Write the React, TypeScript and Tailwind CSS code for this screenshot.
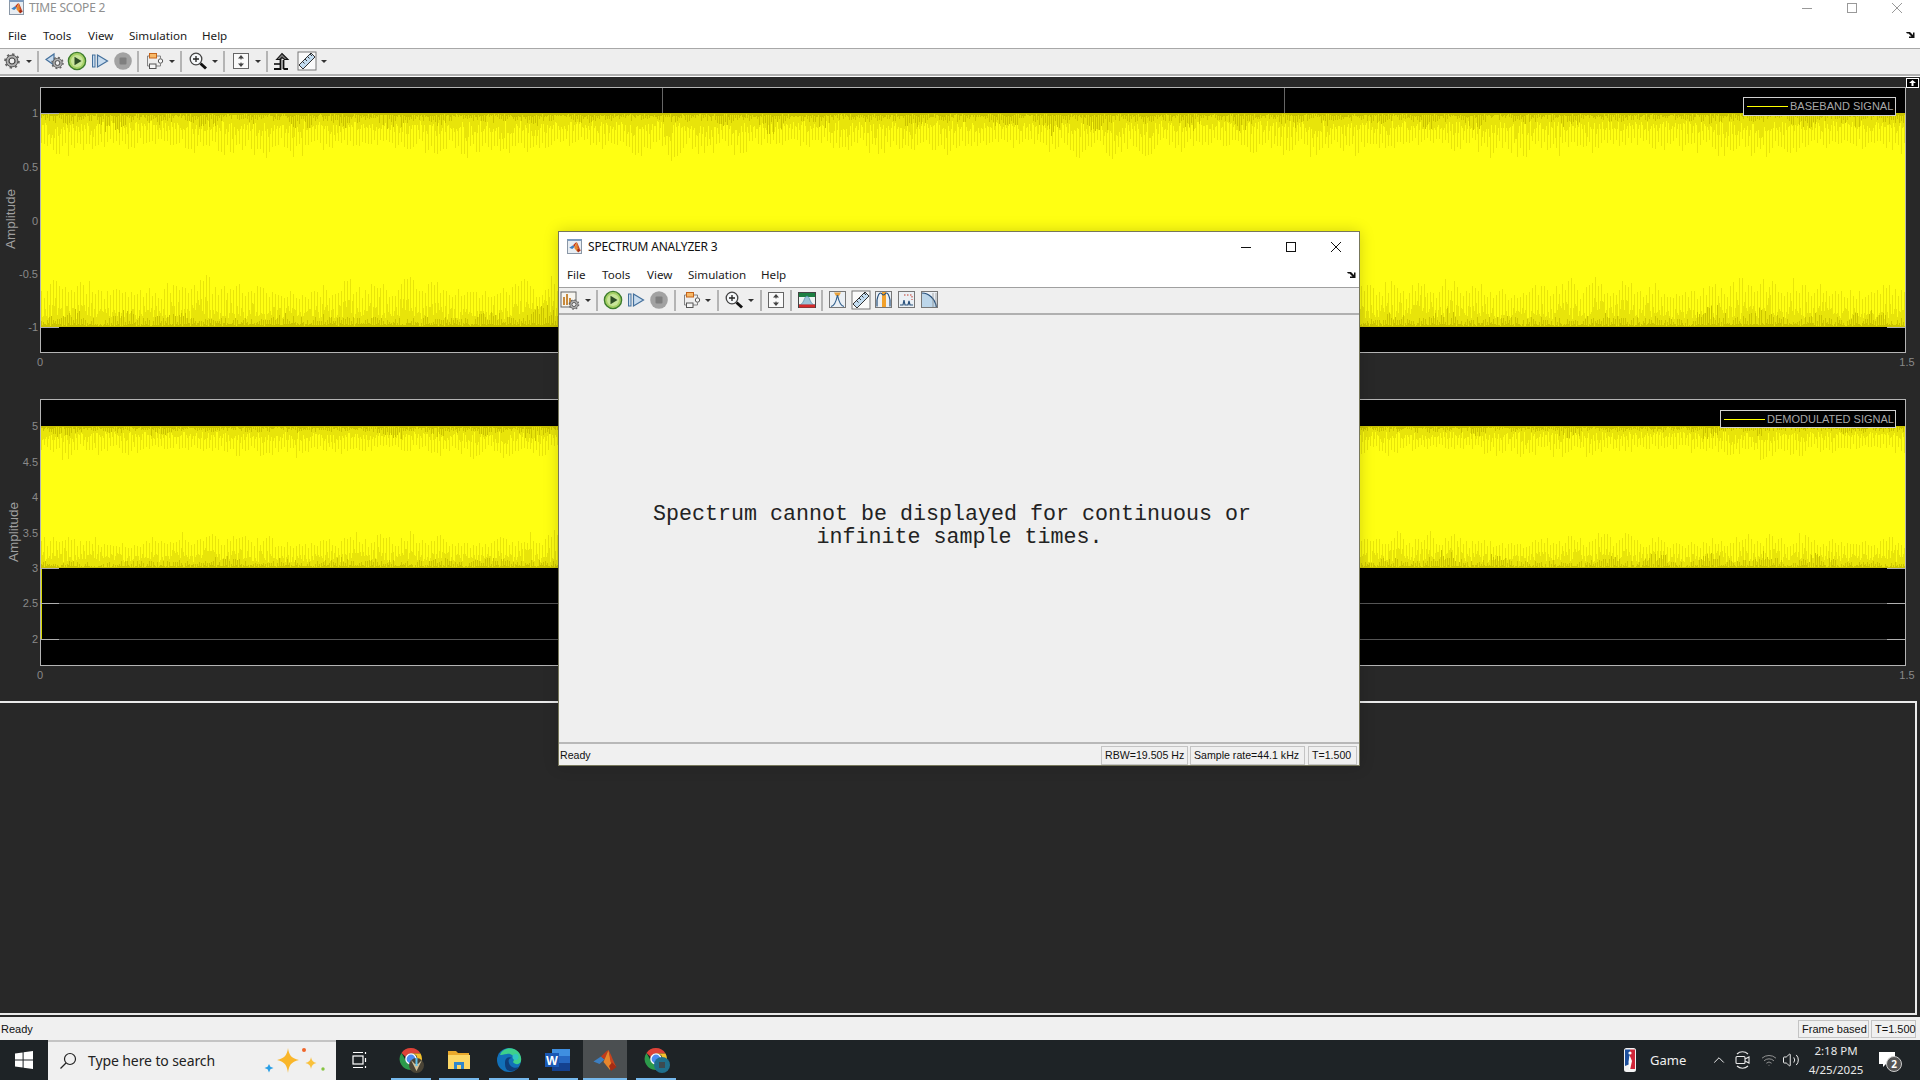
import React from "react";
import { ChevronUp, Volume2, Wifi } from "lucide-react";

type IP = { className?: string };

function rnd(i: number) {
  const s = Math.sin(i * 12.9898) * 43758.5453;
  return s - Math.floor(s);
}

function buildWave(W: number, H: number, scale: number, seed: number) {
  let mid = "";
  let dark = "";
  for (let x = 0; x < W; x++) {
    const p = x + 0.5;
    const envT = 0.45 + 0.55 * Math.abs(Math.sin((x * Math.PI) / 34 + seed) * Math.cos((x * Math.PI) / 211 + seed));
    const envB = 0.45 + 0.55 * Math.abs(Math.sin((x * Math.PI) / 29 + seed * 2) * Math.cos((x * Math.PI) / 173));
    const r1 = rnd(x + seed);
    const r2 = rnd(x * 1.7 + seed + 11);
    const r3 = rnd(x * 2.3 + seed + 37);
    const r4 = rnd(x * 3.1 + seed + 53);
    const tall = x % 3 === 0;
    const dTop = scale * (tall ? 18 + 30 * envT * (0.45 + 0.55 * r1) : 8 + 20 * envT * r1);
    const dBot = scale * (tall ? 20 + 34 * envB * (0.45 + 0.55 * r3) : 8 + 24 * envB * r3);
    mid += `M${p} 0V${dTop.toFixed(1)}`;
    mid += `M${p} ${H}V${(H - dBot).toFixed(1)}`;
    const lobeT = rnd(Math.floor(x / 47) + seed * 5);
    const lobeB = rnd(Math.floor(x / 53) + seed * 7);
    const kT = Math.pow(Math.abs(Math.sin((x * Math.PI) / 47)), 2) * lobeT;
    const kB = Math.pow(Math.abs(Math.sin((x * Math.PI) / 53)), 2) * lobeB;
    const dkT = scale * (1 + (x % 2 === 0 ? 18 * kT * r2 + 7 * r3 : 3 * r3));
    const dkB = scale * (1 + (x % 2 === 0 ? 20 * kB * r4 + 9 * r1 : 3 * r1));
    dark += `M${p} 0V${dkT.toFixed(1)}`;
    dark += `M${p} ${H}V${(H - dkB).toFixed(1)}`;
  }
  return { mid, dark };
}

const wave1 = buildWave(1864, 214, 1, 3);
const wave2 = buildWave(1864, 142, 0.72, 9);

function Wave({ data, h, className }: { data: { mid: string; dark: string }; h: number; className: string }) {
  return (
    <svg className={className} width={1864} height={h} viewBox={`0 0 1864 ${h}`} shapeRendering="crispEdges">
      <rect width={1864} height={h} fill="#ffff12" />
      <path d={data.mid} stroke="#e8e40a" strokeWidth={1} fill="none" />
      <path d={data.dark} stroke="#cbc400" strokeWidth={1} fill="none" />
    </svg>
  );
}

const Svg = ({ className, children }: IP & { children: React.ReactNode }) => (
  <svg className={"shrink-0 " + (className ?? "")} width={20} height={20} viewBox="0 0 20 20">
    {children}
  </svg>
);

const GearShape = ({ cx = 10, cy = 10, s = 1 }: { cx?: number; cy?: number; s?: number }) => (
  <g transform={`translate(${cx} ${cy}) scale(${s})`}>
    <circle r={6.9} fill="none" stroke="#666" strokeWidth={1.8} strokeDasharray="2.4 3" />
    <circle r={5.9} fill="#b0b0b0" stroke="#555" strokeWidth={1} />
    <circle r={3} fill="#f0f0f0" stroke="#444" strokeWidth={1.2} />
  </g>
);

const Gear = (p: IP) => <Svg {...p}><GearShape /></Svg>;
const BackGear = (p: IP) => (
  <Svg {...p}>
    <path d="M1 8.5 L9 3 V14 Z" fill="#c5d9ec" stroke="#44709c" strokeWidth={1.2} />
    <GearShape cx={12.5} cy={12} s={0.8} />
  </Svg>
);
const Play = (p: IP) => (
  <Svg {...p}>
    <circle cx={10} cy={10} r={8.6} fill="#a6d066" stroke="#3d7d2c" strokeWidth={1.4} />
    <circle cx={10} cy={10} r={6} fill="#c8e59a" />
    <path d="M7.5 5.8 L14.5 10 L7.5 14.2 Z" fill="#2e4d26" />
  </Svg>
);
const Step = (p: IP) => (
  <Svg {...p}>
    <rect x={2.5} y={4} width={2.5} height={12} fill="#c8dcef" stroke="#44709c" />
    <path d="M7.5 4 L17.5 10 L7.5 16 Z" fill="#c8dcef" stroke="#44709c" strokeWidth={1.2} />
  </Svg>
);
const Stop = (p: IP) => (
  <Svg {...p}>
    <circle cx={10} cy={10} r={8.8} fill="#a2a2a2" />
    <rect x={6.5} y={6.5} width={7} height={7} rx={1} fill="#7f7f7f" />
  </Svg>
);
const Block = (p: IP) => (
  <Svg {...p}>
    <path d="M5 5 H2.5 V15 H5.5 M11 5 H15.5 V7.5 M10 15 H15.5 V12.5" fill="none" stroke="#777" strokeWidth={0.9} />
    <rect x={4.5} y={2.5} width={7} height={4.5} fill="#f7b867" stroke="#c5641a" />
    <rect x={4.5} y={13} width={6.5} height={4.5} fill="#f6f6f6" stroke="#555" />
    <circle cx={15.5} cy={10} r={2.2} fill="#f6f6f6" stroke="#555" />
  </Svg>
);
const Zoom = (p: IP) => (
  <Svg {...p}>
    <circle cx={8} cy={8} r={5.8} fill="#f6f8fa" stroke="#444" strokeWidth={1.3} />
    <path d="M5 8 H11 M8 5 V11" stroke="#222" strokeWidth={1.3} />
    <path d="M12.5 12.5 L18 17.5" stroke="#111" strokeWidth={3} />
  </Svg>
);
const Fit = (p: IP) => (
  <Svg {...p}>
    <rect x={2.5} y={2.5} width={15} height={15} fill="#fafafa" stroke="#666" />
    <path d="M10 4 L13 7.5 H7 Z M10 16 L13 12.5 H7 Z" fill="#444" />
    <path d="M10 7 V8.5 M10 13 V11.5" stroke="#444" />
  </Svg>
);
const Trigger = (p: IP) => (
  <Svg {...p}>
    <path d="M2 18 H8.5 V7.5" fill="none" stroke="#111" strokeWidth={1.8} />
    <path d="M11.5 18 H16 M11.5 18 V9" fill="none" stroke="#111" strokeWidth={1.8} />
    <path d="M4.5 8.5 L10 2.5 L16 8.5 L12.5 8.5 L10 6.5 L8 8.5 Z" fill="#777" stroke="#111" strokeWidth={1.1} />
    <path d="M2 13 L8 13" stroke="#111" strokeWidth={1.6} />
  </Svg>
);
const Ruler = (p: IP) => (
  <Svg {...p}>
    <rect x={1} y={1} width={18} height={18} fill="#fafafa" stroke="#777" />
    <path d="M2 14 L14 2 L18 6 L6 18 Z" fill="#c3dcf0" stroke="#333" />
    <path d="M5.5 10.5 L7.5 12.5 M8 8 L10 10 M10.5 5.5 L12.5 7.5 M13 3 L15 5" stroke="#333" />
  </Svg>
);
const Caret = ({ className }: IP) => (
  <svg className={"shrink-0 " + (className ?? "")} width={8} height={5} viewBox="0 0 8 5">
    <path d="M1 1 H7 L4 4 Z" fill="#333" />
  </svg>
);
const Sep = ({ className }: IP) => <div className={"w-[2px] h-[21px] shrink-0 bg-[#b4b4b4] " + (className ?? "")} />;
const ChartGear = (p: IP) => (
  <Svg {...p}>
    <rect x={1} y={2} width={15} height={15} fill="#f6f4ee" stroke="#666" />
    <path d="M4 15 V7 M7 15 V4 M10 15 V8" stroke="#c98a3c" strokeWidth={2} />
    <GearShape cx={14} cy={14.5} s={0.68} />
  </Svg>
);
const SpectrumIcon = (p: IP) => (
  <Svg {...p}>
    <rect x={1.5} y={2.5} width={17} height={15} fill="#eef4f2" stroke="#444" />
    <rect x={2} y={3} width={16} height={4} fill="#1c7f42" />
    <path d="M2 15 C7 15 7 6 10 6 C13 6 13 15 18 15 Z" fill="#9cc4d8" stroke="#3a7a9a" strokeWidth={0.6} />
    <rect x={2} y={14.5} width={16} height={3} fill="#d62a2a" />
  </Svg>
);
const Frame = ({ children, ...p }: IP & { children: React.ReactNode }) => (
  <Svg {...p}>
    <rect x={1.5} y={1.5} width={16} height={16} fill="#ebf0f5" stroke="#777" />
    {children}
  </Svg>
);
const PeakA = (p: IP) => (
  <Frame {...p}>
    <path d="M6 2.5 H13 L11 6 H8 Z" fill="#eaa23c" />
    <path d="M3 16.5 C7 16 8.5 10 9.5 5 C10.5 10 12 16 16 16.5" fill="none" stroke="#33618f" strokeWidth={1.2} />
  </Frame>
);
const PeakB = (p: IP) => (
  <Frame {...p}>
    <rect x={8} y={2} width={4} height={15} fill="#f2a12b" />
    <path d="M3 16.5 V10 C4 5 5 3 6.5 3 C8 3 8 5 9.5 5 C11 5 11 3 12.5 3 C14 3 15 5 16 10 V16.5" fill="none" stroke="#27507c" strokeWidth={1.2} />
  </Frame>
);
const PeakC = (p: IP) => (
  <Frame {...p}>
    <path d="M3 15 H6 L7 10 L8 15 H11 L12 11 L13 15 H16" fill="none" stroke="#27507c" strokeWidth={1.2} />
    <path d="M7 5 H15 V10" fill="none" stroke="#c0392b" strokeDasharray="1.5 1.5" />
  </Frame>
);
const PeakD = (p: IP) => (
  <Frame {...p}>
    <path d="M2 3 C9 3 15 9 16.5 17 H2 Z" fill="#bcd6ea" />
    <path d="M2 3 C9 3 15 9 16.5 17" fill="none" stroke="#27507c" strokeWidth={1.2} />
    <path d="M13 3 V17 M16 3 V17" stroke="#888" strokeWidth={0.7} />
  </Frame>
);

const MatlabMark = ({ size = 14 }: { size?: number }) => (
  <svg className="shrink-0" width={size} height={size} viewBox="0 0 24 24">
    <path d="M0.5 13.5 L8 8.5 L11.5 11.5 L6.5 16 Z" fill="#3d7fc1" />
    <path d="M8 8.5 L11.5 11.5 L15.5 2 C13 3 11 6 8 8.5 Z" fill="#c23a1b" />
    <path d="M15.5 2 L11.5 11.5 L10.5 14 L17 22 L19 17 Z" fill="#e8862c" />
    <path d="M15.5 2 C18 6 20.5 14 23.5 19 L17.5 14 Z" fill="#c8431d" />
    <path d="M19 14.5 L23.5 19 L18 23 L16 18 Z" fill="#a52c14" />
  </svg>
);
const WindowIcon = () => (
  <div className="w-[15px] h-[15px] shrink-0 flex items-center justify-center bg-[#e8edf2] border border-[#8a97a6] border-t-[2px] border-t-[#7d9cc0]">
    <MatlabMark size={12} />
  </div>
);

const OverflowArrow = ({ className }: IP) => (
  <svg className={className} width={9} height={8} viewBox="0 0 9 8">
    <path d="M0 1 H4 L7 4 V1.5 H8.5 V7 H3 V5.5 H5.5 L2.5 2.5 H1 Z" fill="#111" />
  </svg>
);

const WinControls = ({ color, gapClass }: { color: string; gapClass: string }) => (
  <div className={"flex items-center " + gapClass}>
    <svg width={10} height={10} viewBox="0 0 10 10"><path d="M0 5.5 H10" stroke={color} /></svg>
    <svg width={10} height={10} viewBox="0 0 10 10"><rect x={0.5} y={0.5} width={9} height={9} fill="none" stroke={color} /></svg>
    <svg width={10} height={10} viewBox="0 0 10 10"><path d="M0 0 L10 10 M10 0 L0 10" stroke={color} /></svg>
  </div>
);

const MENU = "font-['Noto_Sans',sans-serif] text-[11.6px] leading-none text-[#1a1a1a]";

function Menu({ className }: IP) {
  return (
    <div className={"flex items-center " + MENU + " " + (className ?? "")}>
      <span className="w-[35px]">File</span>
      <span className="w-[45px]">Tools</span>
      <span className="w-[41px]">View</span>
      <span className="w-[73px]">Simulation</span>
      <span>Help</span>
    </div>
  );
}

const yTicks1 = [
  { c: "top-[25px]", t: "1" },
  { c: "top-[79px]", t: "0.5" },
  { c: "top-[133px]", t: "0" },
  { c: "top-[186px]", t: "-0.5" },
  { c: "top-[239px]", t: "-1" },
];
const yTicks2 = [
  { c: "top-[26px]", t: "5" },
  { c: "top-[62px]", t: "4.5" },
  { c: "top-[97px]", t: "4" },
  { c: "top-[133px]", t: "3.5" },
  { c: "top-[168px]", t: "3" },
  { c: "top-[203px]", t: "2.5" },
  { c: "top-[239px]", t: "2" },
];
const AX = "font-['Liberation_Sans',sans-serif] text-[11px] leading-none text-[#8a8a8a]";

function Ticks({ ticks }: { ticks: { c: string; t: string }[] }) {
  return (
    <>
      {ticks.map((k) => (
        <span key={k.t} className={"absolute right-full mr-[3px] -translate-y-1/2 " + AX + " " + k.c}>{k.t}</span>
      ))}
    </>
  );
}

const XLabels = () => (
  <>
    <span className={"absolute top-full mt-[5px] -left-[1px] -translate-x-1/2 " + AX}>0</span>
    <span className={"absolute top-full mt-[5px] -right-[2px] translate-x-1/2 " + AX}>1.5</span>
  </>
);

function Legend({ label, className }: { label: string; className: string }) {
  return (
    <div className={"absolute flex items-center bg-black border border-[#d0d0d0] pl-[3px] " + className}>
      <div className="w-[41px] h-[1px] bg-[#ffff00] mr-[2px] shrink-0" />
      <span className="font-['Liberation_Sans',sans-serif] text-[11px] leading-none text-[#a8a8a8] whitespace-nowrap">{label}</span>
    </div>
  );
}

const TL = "absolute left-0 w-[18px] h-px bg-[#b0b0b0]";
const TR = "absolute right-0 w-[18px] h-px bg-[#b0b0b0]";

function Plot1() {
  return (
    <div className="relative ml-[40px] w-[1866px] h-[266px] bg-black border border-[#b4b4b4] mt-[10px]">
      <div className="absolute left-[621px] top-0 w-px h-[25px] bg-[#666]" />
      <div className="absolute left-[1243px] top-0 w-px h-[25px] bg-[#666]" />
      <Wave data={wave1} h={214} className="absolute left-0 top-[25px]" />
      <div className={TL + " top-[25px]"} />
      <div className={TL + " top-[239px]"} />
      <div className={TR + " top-[239px]"} />
      <Ticks ticks={yTicks1} />
      <XLabels />
      <span className="absolute -left-[60px] top-[131px] w-[60px] text-center -translate-y-1/2 -rotate-90 font-['Liberation_Sans',sans-serif] text-[13.5px] leading-none text-[#a0a0a0]">Amplitude</span>
      <Legend label="BASEBAND SIGNAL" className="left-[1702px] top-[9px] w-[153px] h-[19px]" />
    </div>
  );
}

function Plot2() {
  return (
    <div className="relative ml-[40px] w-[1866px] h-[267px] bg-black border border-[#b4b4b4] mt-[46px]">
      <div className="absolute left-0 right-0 top-[203px] h-px bg-[#555]" />
      <div className="absolute left-0 right-0 top-[239px] h-px bg-[#555]" />
      <div className="absolute left-0 top-[168px] w-px h-[71px] bg-[#d8d800]" />
      <Wave data={wave2} h={142} className="absolute left-0 top-[26px]" />
      <div className={TL + " top-[168px]"} />
      <div className={TL + " top-[203px]"} />
      <div className={TL + " top-[239px]"} />
      <div className={TR + " top-[168px]"} />
      <div className={TR + " top-[203px]"} />
      <div className={TR + " top-[239px]"} />
      <Ticks ticks={yTicks2} />
      <XLabels />
      <span className="absolute -left-[57px] top-[132px] w-[60px] text-center -translate-y-1/2 -rotate-90 font-['Liberation_Sans',sans-serif] text-[13.5px] leading-none text-[#a0a0a0]">Amplitude</span>
      <Legend label="DEMODULATED SIGNAL" className="left-[1679px] top-[10px] w-[176px] h-[18px]" />
    </div>
  );
}

const CELL = "flex items-center px-[3px] border border-[#c4c4c4] font-['Liberation_Sans',sans-serif] leading-none text-[#111] whitespace-nowrap";

function SpectrumWindow() {
  return (
    <div className="absolute left-[558px] top-[231px] w-[802px] h-[535px] flex flex-col bg-[#efefef] border border-[#77775a] shadow-[0_0_14px_rgba(0,0,0,0.18)]">
      <div className="bg-white h-[56px] shrink-0 flex flex-col border-b border-[#a0a0a0] relative">
        <div className="h-[29px] flex items-center pl-[8px] pr-[18px]">
          <WindowIcon />
          <span className="ml-[6px] font-['Noto_Sans',sans-serif] text-[12px] leading-none text-[#111] tracking-[-0.2px]">SPECTRUM ANALYZER 3</span>
          <div className="ml-auto"><WinControls color="#111" gapClass="gap-[35px]" /></div>
        </div>
        <Menu className="ml-[8px] mt-[8px]" />
        <OverflowArrow className="absolute right-[3px] top-[39px]" />
      </div>
      <div className="h-[27px] shrink-0 flex items-center border-b-2 border-[#b0b0b0] pb-[1px]">
        <ChartGear className="ml-[1px]" /><Caret className="ml-[4px]" /><Sep className="ml-[4px]" />
        <Play className="ml-[5px]" /><Step className="ml-[3px]" /><Stop className="ml-[3px]" /><Sep className="ml-[5px]" />
        <Block className="ml-[6px]" /><Caret className="ml-[2px]" /><Sep className="ml-[5px]" />
        <Zoom className="ml-[5px]" /><Caret className="ml-[3px]" /><Sep className="ml-[5px]" />
        <Fit className="ml-[4px]" /><Sep className="ml-[4px]" />
        <SpectrumIcon className="ml-[5px]" /><Sep className="ml-[4px]" />
        <PeakA className="ml-[5px]" /><Ruler className="ml-[3px]" /><PeakB className="ml-[3px]" /><PeakC className="ml-[3px]" /><PeakD className="ml-[3px]" />
      </div>
      <div className="flex-1 flex items-center justify-center pr-[14px] pb-[6px] font-['Liberation_Mono',monospace] text-[21.67px] leading-[23px] text-[#222] text-center">
        <div>Spectrum cannot be displayed for continuous or<br /><span className="pl-[15px]">infinite sample times.</span></div>
      </div>
      <div className="h-[23px] shrink-0 flex items-center border-t-2 border-[#b8b8b8] bg-[#f0f0f0] pr-[2px] pt-[1px]">
        <span className="ml-[1px] font-['Liberation_Sans',sans-serif] text-[10.6px] leading-none text-[#111]">Ready</span>
        <div className={CELL + " text-[10.6px] ml-auto w-[87px] h-[19px]"}>RBW=19.505 Hz</div>
        <div className={CELL + " text-[10.6px] ml-[2px] w-[115px] h-[19px]"}>Sample rate=44.1 kHz</div>
        <div className={CELL + " text-[10.6px] ml-[3px] w-[49px] h-[19px]"}>T=1.500</div>
      </div>
    </div>
  );
}

/* Taskbar glyphs */
const WinLogo = () => (
  <svg width={18} height={18} viewBox="0 0 18 18">
    <path d="M0 2.6 L7.6 1.5 V8.5 H0 Z M8.6 1.3 L18 0 V8.5 H8.6 Z M0 9.5 H7.6 V16.5 L0 15.4 Z M8.6 9.5 H18 V18 L8.6 16.7 Z" fill="#fff" />
  </svg>
);
const Chrome = ({ badge }: { badge: "a" | "b" }) => (
  <svg width={28} height={28} viewBox="0 0 28 28">
    <g transform="translate(2 1)">
      <path d="M12 1 A11 11 0 0 1 21.5 6.5 H12 A5.5 5.5 0 0 0 6.8 10 L2.5 6 A11 11 0 0 1 12 1 Z" fill="#dd4238" />
      <path d="M21.5 6.5 A11 11 0 0 1 12.5 23 L17 14.8 A5.5 5.5 0 0 0 17 8 L12 6.5 Z" fill="#f3c02c" />
      <path d="M2.5 6 L7.5 15 A5.5 5.5 0 0 0 13 17.5 L12.5 23 A11 11 0 0 1 2.5 6 Z" fill="#2c9a4b" />
      <circle cx={12} cy={12} r={5.8} fill="#fff" />
      <circle cx={12} cy={12} r={4.4} fill="#4b8bf0" />
      {badge === "a" ? (
        <g>
          <circle cx={17.5} cy={18.5} r={7.5} fill="#4a4436" />
          <path d="M12 13 L17.5 24 L23 13 L19 17 H16 Z" fill="#d2c29a" />
          <path d="M17.5 11 V19" stroke="#5ec0ea" strokeWidth={2} />
        </g>
      ) : (
        <g>
          <circle cx={18} cy={18} r={8} fill="#1f6f8c" />
          <rect x={15} y={15} width={6} height={6} fill="#3d4a50" />
        </g>
      )}
    </g>
  </svg>
);
const Explorer = () => (
  <svg width={24} height={24} viewBox="0 0 24 24">
    <path d="M1 3 H9 L11 5 H22 V21 H1 Z" fill="#e9a92c" />
    <rect x={1} y={7} width={22} height={14} fill="#fbd766" />
    <path d="M7 21 V14 H17 V21 H14 V17 H10 V21 Z" fill="#2e86cc" />
  </svg>
);
const Edge = () => (
  <svg width={26} height={26} viewBox="0 0 26 26">
    <circle cx={13} cy={13} r={12} fill="#1270b8" />
    <path d="M4 8 C6 2 13 0 18 2 C23 4 26 9 25 14 C24 18 19 18 17 15 C20 11 16 6 11 7 C8 7.5 5 8 4 8 Z" fill="#3dd08c" />
    <path d="M9 15 C9 11 13 9 16 11 C13 11 12 13 13 16 C14 20 19 22 23 20 C20 24 15 25 11 23 C9 21 9 18 9 15 Z" fill="#0f3e7a" />
    <circle cx={19.5} cy={10} r={3} fill="#2fc4c2" />
  </svg>
);
const Word = () => (
  <svg width={26} height={24} viewBox="0 0 26 24">
    <rect x={7} y={1} width={18} height={7} fill="#3f8fe0" />
    <rect x={7} y={8} width={18} height={7} fill="#2668c2" />
    <rect x={7} y={15} width={18} height={8} fill="#14418f" />
    <rect x={0} y={5} width={14} height={14} fill="#1a58b4" />
    <text x={7} y={16.5} textAnchor="middle" fill="#fff" fontSize={12.5} fontWeight={700} fontFamily="'Liberation Sans', sans-serif">W</text>
  </svg>
);
const SearchStars = () => (
  <svg width={66} height={40} viewBox="0 0 66 40">
    <path d="M26 8 C27 15 29 18 37 20 C29 22 27 25 26 33 C25 25 23 22 15 20 C23 18 25 15 26 8 Z" fill="#f9b62a" />
    <path d="M49 17 C49.5 20.5 51 22 54.5 23 C51 24 49.5 25.5 49 29 C48.5 25.5 47 24 43.5 23 C47 22 48.5 20.5 49 17 Z" fill="#f9c13c" />
    <path d="M7 24 L8.4 26.8 L11.5 28 L8.4 29.2 L7 32.5 L5.6 29.2 L2.5 28 L5.6 26.8 Z" fill="#2a9fe6" />
    <circle cx={42} cy={10} r={2} fill="#f0662a" />
    <circle cx={61} cy={29} r={1.7} fill="#86c440" />
  </svg>
);
const NbaLogo = () => (
  <svg width={12} height={24} viewBox="0 0 12 24">
    <rect width={12} height={24} rx={2.5} fill="#f4f4f4" />
    <path d="M1 1.5 H6 V16 L1 18 Z" fill="#1d4f9c" />
    <path d="M6 1.5 H11 V21 H5 L6 16 Z" fill="#cf2638" />
    <circle cx={6} cy={5} r={1.6} fill="#fff" />
    <path d="M5.5 7 L8 13 L6 22 H5 L4.5 14 Z" fill="#fff" />
  </svg>
);
const MeetIcon = () => (
  <svg width={18} height={20} viewBox="0 0 18 20" fill="none" stroke="#e8e8e8" strokeWidth={1.1}>
    <path d="M3 4 A8 8 0 0 1 14 4 M3 16 A8 8 0 0 0 14 16" />
    <rect x={2} y={6.5} width={9} height={7} rx={1} />
    <path d="M11 9 L15 7 V13 L11 11" />
  </svg>
);

const TaskApp = ({ w, ml, active, children }: { w: string; ml: string; active?: boolean; children: React.ReactNode }) => (
  <div className={"relative h-full shrink-0 flex items-center justify-center " + w + " " + ml + (active ? " bg-[#4b4f51]" : "")}>
    {children}
    <div className="absolute left-0 right-0 bottom-0 h-[2px] bg-[#76b9ed]" />
  </div>
);

export default function App() {
  return (
    <div className="relative w-[1920px] h-[1080px] overflow-hidden flex flex-col bg-[#282828]">
      {/* title + menu */}
      <div className="h-[49px] shrink-0 bg-white border-b border-[#a8a8a8] relative">
        <div className="h-[15px] flex items-center pl-[9px] pr-[18px]">
          <WindowIcon />
          <span className="ml-[5px] font-['Noto_Sans',sans-serif] text-[12px] leading-none text-[#8f8f8f] tracking-[-0.2px]">TIME SCOPE 2</span>
          <div className="ml-auto"><WinControls color="#999" gapClass="gap-[35px]" /></div>
        </div>
        <Menu className="ml-[8px] mt-[15px]" />
        <OverflowArrow className="absolute right-[5px] top-[31px]" />
      </div>
      {/* toolbar */}
      <div className="h-[27px] shrink-0 flex items-center bg-[#eeeeee] border-b-2 border-[#b0b0b0] pb-[1px]">
        <Gear className="ml-[2px]" /><Caret className="ml-[3px]" /><Sep className="ml-[4px]" />
        <BackGear className="ml-[6px]" /><Play className="ml-[2px]" /><Step className="ml-[3px]" /><Stop className="ml-[3px]" /><Sep className="ml-[4px]" />
        <Block className="ml-[6px]" /><Caret className="ml-[3px]" /><Sep className="ml-[4px]" />
        <Zoom className="ml-[6px]" /><Caret className="ml-[3px]" /><Sep className="ml-[4px]" />
        <Fit className="ml-[6px]" /><Caret className="ml-[3px]" /><Sep className="ml-[4px]" />
        <Trigger className="ml-[4px]" /><Ruler className="ml-[5px]" /><Caret className="ml-[3px]" />
      </div>
      {/* plots */}
      <div className="relative flex-1 flex flex-col border-t border-white min-h-0">
        <div className="absolute right-[1px] top-[1px] w-[13px] h-[10px] bg-black border border-white flex items-center justify-center">
          <svg width={7} height={6} viewBox="0 0 7 6"><path d="M3.5 0 L7 3 H4.5 V6 H2.5 V3 H0 Z" fill="#fff" /></svg>
        </div>
        <Plot1 />
        <Plot2 />
        <div className="mt-[35px] w-[1918px] h-[314px] -ml-[1px] border-2 border-white/90 border-l-0" />
      </div>
      {/* status */}
      <div className="h-[23px] shrink-0 flex items-center bg-[#f0f0f0] pr-[4px] pt-[1px]">
        <span className="ml-[1px] font-['Liberation_Sans',sans-serif] text-[11px] leading-none text-[#111]">Ready</span>
        <div className={CELL + " text-[11px] ml-auto w-[71px] h-[18px]"}>Frame based</div>
        <div className={CELL + " text-[11px] ml-[2px] w-[45px] h-[18px]"}>T=1.500</div>
      </div>
      {/* taskbar */}
      <div className="h-[40px] shrink-0 flex items-center bg-[#1e2326] text-white">
        <div className="w-[48px] h-full flex items-center justify-center"><WinLogo /></div>
        <div className="w-[288px] h-full flex items-center bg-[#f0f0f0] border-t-2 border-[#c4c4c4] relative">
          <svg className="ml-[11px]" width={18} height={18} viewBox="0 0 18 18" fill="none" stroke="#222" strokeWidth={1.2}>
            <circle cx={11} cy={7} r={5.5} /><path d="M7 11 L1.5 16.5" />
          </svg>
          <span className="ml-[11px] font-['Noto_Sans',sans-serif] text-[14px] leading-none text-[#222] tracking-[-0.1px]">Type here to search</span>
          <div className="absolute right-[8px] -top-[2px]"><SearchStars /></div>
        </div>
        <div className="w-[48px] h-full flex items-center justify-center">
          <svg width={16} height={18} viewBox="0 0 16 18" fill="none" stroke="#fff" strokeWidth={1.2}>
            <path d="M1 1.5 H11 M1 16.5 H11 M13.5 1 V3 M13.5 7 V11 M13.5 15 V17" /><rect x={1} y={5} width={10} height={8} />
          </svg>
        </div>
        <TaskApp w="w-[40px]" ml="ml-[7px]"><Chrome badge="a" /></TaskApp>
        <TaskApp w="w-[40px]" ml="ml-[8px]"><Explorer /></TaskApp>
        <TaskApp w="w-[40px]" ml="ml-[10px]"><Edge /></TaskApp>
        <TaskApp w="w-[40px]" ml="ml-[9px]"><Word /></TaskApp>
        <TaskApp w="w-[44px]" ml="ml-[5px]" active><MatlabMark size={24} /></TaskApp>
        <TaskApp w="w-[40px]" ml="ml-[9px]"><Chrome badge="b" /></TaskApp>
        <div className="ml-auto flex items-center h-full">
          <NbaLogo />
          <span className="ml-[14px] w-[60px] font-['Noto_Sans',sans-serif] text-[13px] leading-none text-[#f0f0f0]">Game</span>
          <ChevronUp size={18} strokeWidth={1.3} color="#f0f0f0" className="shrink-0" />
          <div className="ml-[6px]"><MeetIcon /></div>
          <Wifi size={16} strokeWidth={1.4} color="#9a9a9a" className="ml-[9px] shrink-0" />
          <Volume2 size={18} strokeWidth={1.3} color="#f0f0f0" className="ml-[5px] shrink-0" />
          <div className="ml-[8px] w-[56px] flex flex-col items-center font-['Noto_Sans',sans-serif] text-[11.5px] leading-[19px] text-[#e8e8e8]">
            <span>2:18 PM</span>
            <span>4/25/2025</span>
          </div>
          <div className="relative ml-[14px] mr-[24px] w-[18px] h-[18px]">
            <svg width={18} height={18} viewBox="0 0 18 18"><path d="M1 1 H17 V13 H8 L5 16 V13 H1 Z" fill="#fff" /></svg>
            <div className="absolute left-[8px] top-[5px] w-[16px] h-[16px] rounded-full bg-[#555] border border-[#ccc] flex items-center justify-center font-['Noto_Sans',sans-serif] text-[10px] font-bold leading-none text-white">2</div>
          </div>
        </div>
      </div>
      <SpectrumWindow />
    </div>
  );
}
